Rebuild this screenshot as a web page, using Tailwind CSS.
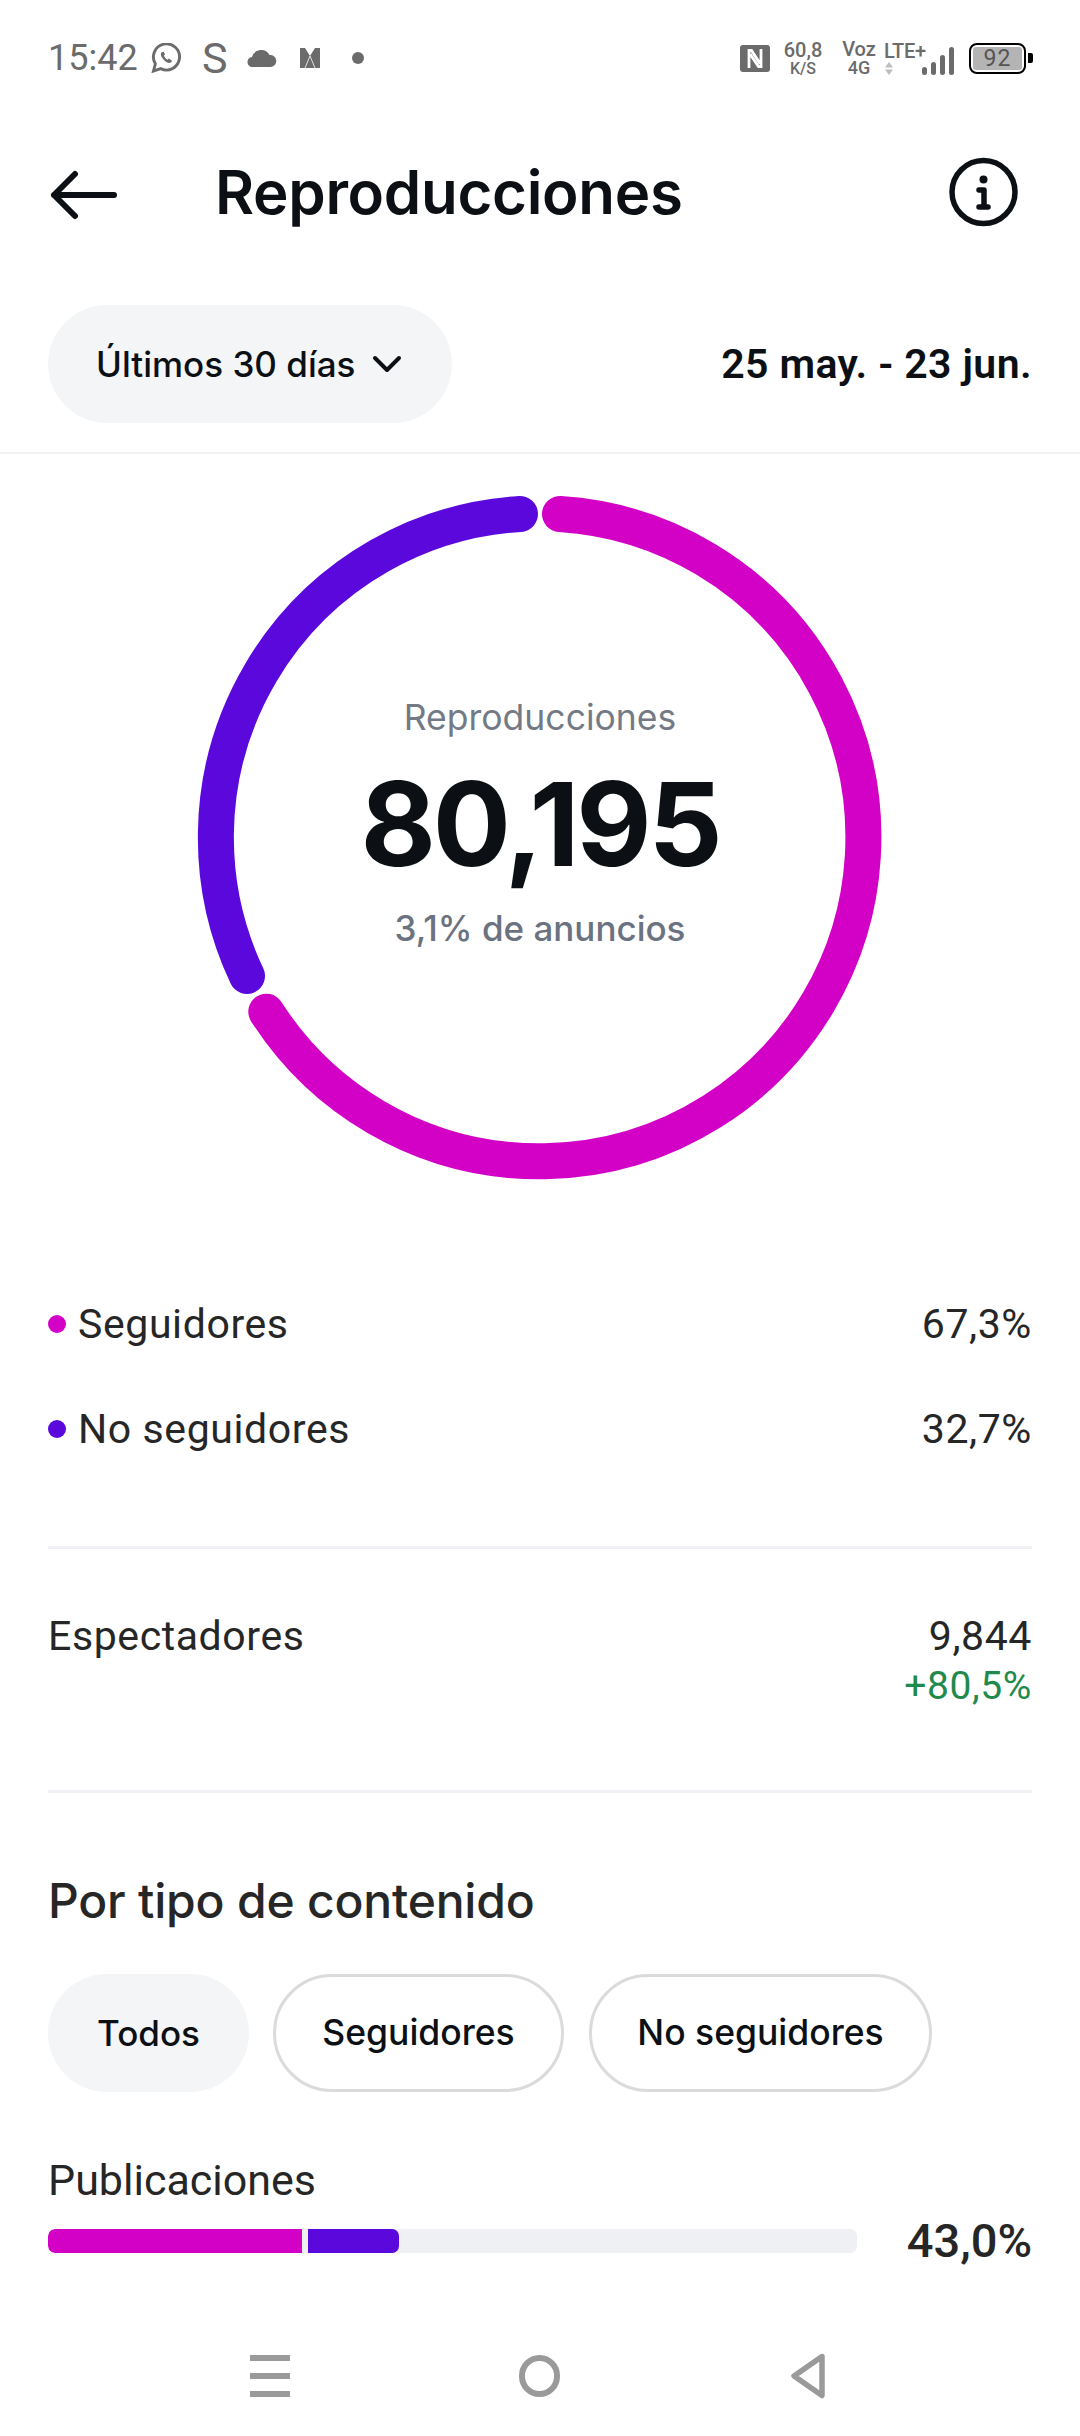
<!DOCTYPE html>
<html><head><meta charset="utf-8"><script src="https://cdn.jsdelivr.net/npm/@tailwindcss/browser@4"></script></head>
<body class="bg-white">
<div class="relative w-[1080px] h-[2436px] overflow-hidden bg-white font-['Inter',sans-serif] text-[#0c1014]">

<!-- status bar -->
<div class="h-[116px] flex items-center justify-between pl-[48px] pr-[54px] text-[#6b6b6b] font-['Roboto',sans-serif]">
  <div class="flex items-center">
    <span class="text-[36px] leading-none w-[88px] whitespace-nowrap">15:42</span>
    <svg class="ml-[15px]" width="31" height="30" viewBox="0 0 32 31" fill="none" stroke="#6b6b6b" stroke-width="3"><path d="M2.500 29l2-7.500A13.500 13.500 0 1 1 10 26.500z"/><path d="M11 9.500c-1.500 1.500-1 4 1.500 7s5 4.500 7.500 4l2-2-3.500-2.500-1.500 1.200c-1.500-.7-3-2.500-3.700-4l1.200-1.500L13 9z" fill="#6b6b6b" stroke="none"/></svg>
    <span class="ml-[20px] w-[24px] text-[43px] leading-none">S</span>
    <svg class="ml-[21px]" width="30" height="18" viewBox="0 0 30 18"><path d="M6 18a5 5 0 0 1-1-10 9.500 9.500 0 0 1 17.500-2A6 6 0 0 1 24 18z" fill="#6b6b6b"/></svg>
    <svg class="ml-[23px]" width="20" height="20" viewBox="0 0 20 20"><path d="M0 0h5l5 8 5-8h5v20H0z" fill="#6b6b6b"/><path d="M10 8L5 20M10 8l5 12" stroke="#fff" stroke-width=".8"/></svg>
    <span class="ml-[32px] w-[12px] h-[12px] rounded-full bg-[#6b6b6b]"></span>
  </div>
  <div class="flex items-center">
    <svg width="30" height="27" viewBox="0 0 30 27" fill="none"><rect width="30" height="27" rx="3" fill="#6b6b6b"/><path d="M9 23V5.500h2.500L20 18.500M21 4v17.500h-2.500L10 9" stroke="#fff" stroke-width="2.800"/></svg>
    <div class="ml-[14px] w-[38px] flex flex-col items-center font-medium leading-none">
      <span class="text-[20px] leading-[20px] whitespace-nowrap">60,8</span>
      <span class="text-[16px] leading-[16px] mt-[1px]">K/S</span>
    </div>
    <div class="ml-[20px] w-[34px] flex flex-col items-center font-medium leading-none">
      <span class="text-[20px] leading-[20px]">Voz</span>
      <span class="text-[18px] leading-[18px]">4G</span>
    </div>
    <div class="ml-[8px] w-[44px] flex flex-col leading-none">
      <span class="text-[20px] leading-[20px] whitespace-nowrap font-medium tracking-[-0.3px]">LTE+</span>
      <svg class="ml-[1px] mt-[1px]" width="8" height="13" viewBox="0 0 8 13"><path d="M4 0l4 5.500H0zM4 13l4-5.500H0z" fill="#bdbdbd"/></svg>
    </div>
    <svg class="-ml-[6px] mt-[6px]" width="32" height="28" viewBox="0 0 32 28" fill="#6b6b6b"><rect x="0" y="20" width="5" height="8" rx="2.500"/><rect x="9" y="15" width="5" height="13" rx="2.500"/><rect x="18" y="8" width="5" height="20" rx="2.500"/><rect x="27" y="0" width="5" height="28" rx="2.500"/></svg>
    <div class="ml-[15px] relative w-[57px] h-[31px] rounded-[8px] border-[2px] border-black p-[2px] flex">
      <div class="flex-1 rounded-[3px] bg-[#b4b4b4] text-[#555] text-[23px] leading-[23px] text-center font-normal tracking-[1px]">92</div>
      <span class="absolute -right-[9px] top-[8px] w-[5px] h-[10px] rounded-r-[2px] bg-black"></span>
    </div>
  </div>
</div>

<!-- header -->
<div class="h-[152px] flex items-center pl-[50px] pr-[62px]">
  <svg class="mt-[6px]" width="70" height="52" viewBox="0 0 70 52" fill="none" stroke="#0c1014" stroke-width="6" stroke-linecap="round" stroke-linejoin="round"><path d="M64 26H4M25 5L4 26l21 21"/></svg>
  <span class="ml-[95px] text-[60px] leading-none font-semibold tracking-[-0.3px]">Reproducciones</span>
  <svg class="ml-auto" width="69" height="70" viewBox="0 0 69 70" fill="none"><circle cx="34.500" cy="35" r="31.500" stroke="#0c1014" stroke-width="5.500"/><circle cx="34.500" cy="22.500" r="4" fill="#0c1014"/><path d="M30 33h5v17M30 50h9" stroke="#0c1014" stroke-width="5.500" stroke-linecap="round" stroke-linejoin="round"/></svg>
</div>

<!-- date row -->
<div class="flex items-center justify-between px-[48px] mt-[37px]">
  <div class="h-[118px] w-[404px] rounded-full bg-[#f3f5f7] flex items-center pl-[48px]">
    <span class="text-[35px] leading-none font-medium">Últimos 30 días</span>
    <svg class="ml-[17px]" width="30" height="18" viewBox="0 0 30 18" fill="none" stroke="#0c1014" stroke-width="4" stroke-linecap="round" stroke-linejoin="round"><path d="M3 3l12 12L27 3"/></svg>
  </div>
  <span class="text-[41px] leading-none font-semibold font-['Roboto',sans-serif] tracking-[0.4px]">25 may. - 23 jun.</span>
</div>
<div class="mt-[29px] h-[2px] bg-[#f0f1f4]"></div>

<!-- donut -->
<div class="relative h-[704px] mt-[28px]">
  <svg class="absolute left-0 top-0" width="1080" height="704" viewBox="0 482 1080 704" fill="none" stroke-width="36" stroke-linecap="round">
    <path d="M560 514A324 324 0 1 1 266.300 1011.700" stroke="#d300c5"/>
    <path d="M247 976A324 324 0 0 1 520 514" stroke="#5a08dc"/>
  </svg>
  <div class="absolute inset-x-0 top-[216px] flex flex-col items-center">
    <span class="text-[35.500px] leading-[40px] text-[#737a85]">Reproducciones</span>
    <span class="mt-[28px] text-[116px] leading-[116px] font-[650] tracking-[-3.200px]">80,195</span>
    <span class="mt-[26px] text-[35px] leading-[40px] font-medium text-[#6b7280]">3,1% de anuncios</span>
  </div>
</div>

<!-- legend -->
<div class="mt-[115px] px-[48px] text-[41px] leading-[46px] tracking-[0.6px] text-[#262626] font-['Roboto',sans-serif]">
  <div class="flex items-center h-[46px]">
    <span class="w-[18px] h-[18px] rounded-full bg-[#d300c5]"></span><span class="ml-[12px]">Seguidores</span><span class="ml-auto">67,3%</span>
  </div>
  <div class="flex items-center h-[46px] mt-[59px]">
    <span class="w-[18px] h-[18px] rounded-full bg-[#5a08dc]"></span><span class="ml-[12px]">No seguidores</span><span class="ml-auto">32,7%</span>
  </div>
</div>
<div class="mx-[48px] mt-[94px] h-[3px] bg-[#f0f1f4]"></div>

<!-- espectadores -->
<div class="mx-[48px] mt-[64px] flex justify-between font-['Roboto',sans-serif] text-[#262626] tracking-[0.6px]">
  <span class="text-[41px] leading-[46px]">Espectadores</span>
  <div class="flex flex-col items-end">
    <span class="text-[41px] leading-[46px]">9,844</span>
    <span class="text-[39px] leading-[40px] mt-[7px] text-[#1f8a4c]">+80,5%</span>
  </div>
</div>
<div class="mx-[48px] mt-[84px] h-[3px] bg-[#f0f1f4]"></div>

<!-- por tipo -->
<h2 class="mx-[48px] mt-[80px] text-[48px] leading-[56px] font-medium tracking-[-0.2px] text-[#262626]">Por tipo de contenido</h2>
<div class="mx-[48px] mt-[45px] flex gap-[24px]">
  <span class="h-[118px] w-[201px] rounded-full bg-[#f3f5f7] flex items-center justify-center text-[35px] font-medium">Todos</span>
  <span class="h-[118px] w-[291px] rounded-full border-[3px] border-[#dbdbdb] flex items-center justify-center text-[35.500px] font-medium">Seguidores</span>
  <span class="ml-[1px] h-[118px] w-[343px] rounded-full border-[3px] border-[#dbdbdb] flex items-center justify-center text-[35.500px] font-medium">No seguidores</span>
</div>
<div class="mx-[48px] mt-[64px] font-['Roboto',sans-serif] text-[#262626]">
  <div class="text-[43px] leading-[48px]">Publicaciones</div>
  <div class="flex items-center mt-[13px]">
    <div class="w-[809px] h-[24px] rounded-[7px] bg-[#eff0f4] flex overflow-hidden">
      <span class="w-[254px] bg-[#d300c5] rounded-l-[7px]"></span>
      <span class="ml-[6px] w-[91px] bg-[#5a08dc] rounded-r-[7px]"></span>
    </div>
    <span class="ml-auto text-[47px] leading-[48px] font-medium">43,0%</span>
  </div>
  <div class="mt-[41px] text-[43px] leading-[48px]">Historias</div>
</div>

<!-- nav bar -->
<div class="absolute left-0 right-0 bottom-0 h-[121px] bg-white">
  <div class="absolute left-[250px] top-[40px] w-[40px] flex flex-col gap-[12px]">
    <span class="h-[6px] bg-[#9a9a9a]"></span><span class="h-[6px] bg-[#9a9a9a]"></span><span class="h-[6px] bg-[#9a9a9a]"></span>
  </div>
  <span class="absolute left-[519px] top-[40px] w-[41px] h-[42px] rounded-full border-[6px] border-[#9a9a9a]"></span>
  <svg class="absolute left-[790px] top-[38px]" width="36" height="46" viewBox="0 0 36 46" fill="none" stroke="#9a9a9a" stroke-width="5.500" stroke-linejoin="round"><path d="M32 3.500L4 23l28 19.500z"/></svg>
</div>
</div>
</body></html>
